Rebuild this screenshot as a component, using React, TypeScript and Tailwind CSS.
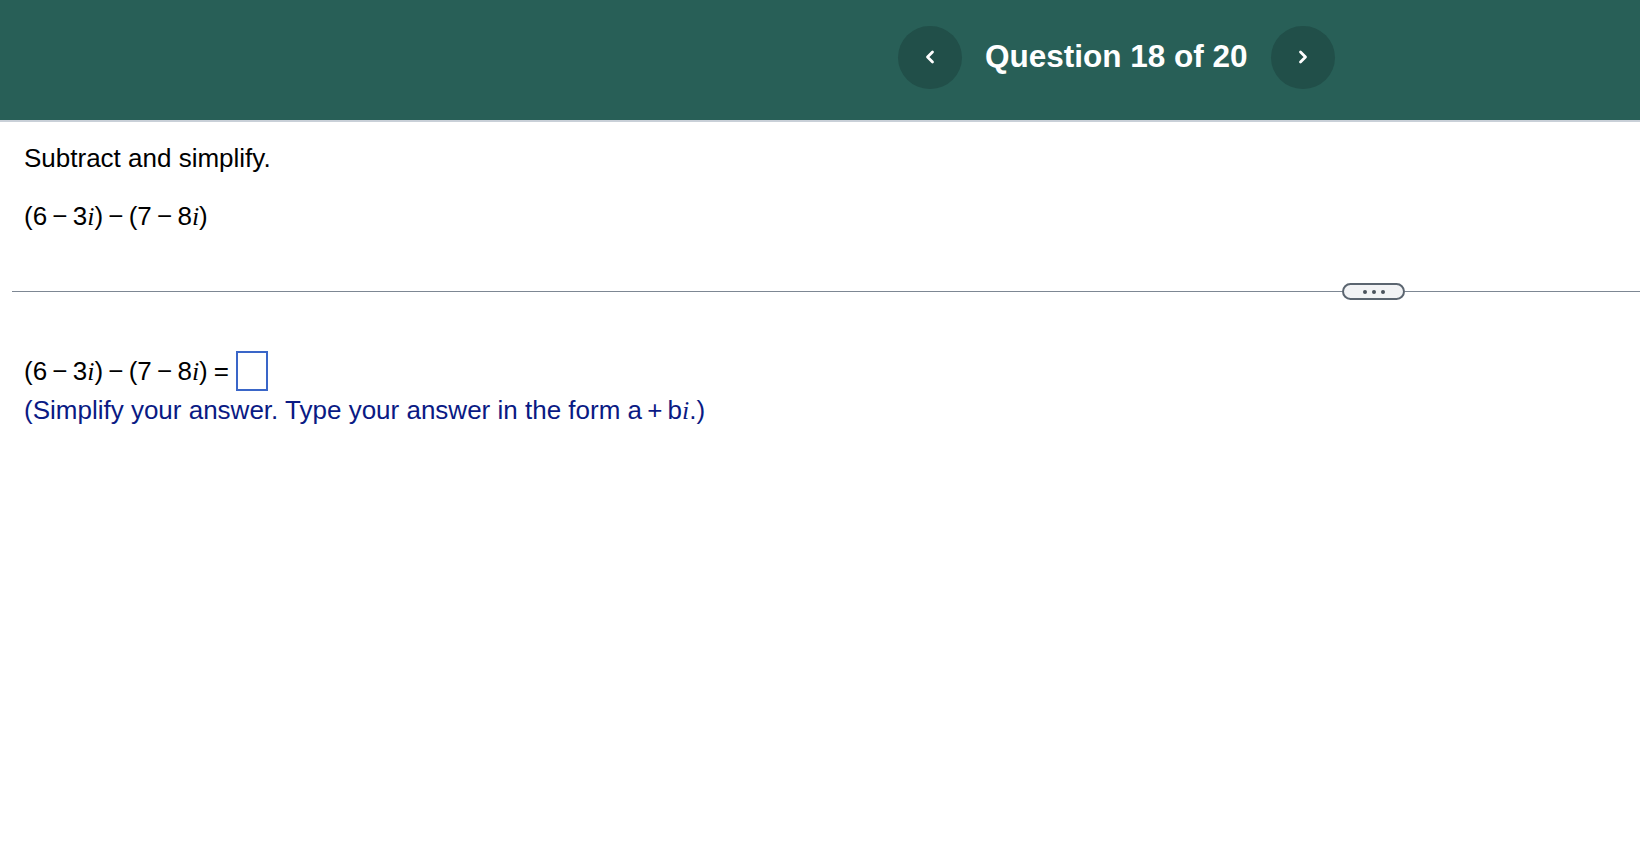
import React from 'react';

function Chevron({ dir }: { dir: 'left' | 'right' }) {
  return (
    <svg width="16" height="16" viewBox="0 0 16 16" fill="none">
      <path
        d={dir === 'left' ? 'M10.5 3 5.5 8l5 5' : 'M5.5 3l5 5-5 5'}
        stroke="white"
        strokeWidth="2.8"
        strokeLinecap="round"
        strokeLinejoin="round"
      />
    </svg>
  );
}

function MathI() {
  return <i className="font-['Liberation_Serif',serif] italic">i</i>;
}

function Expr() {
  return (
    <span className="whitespace-nowrap">
      (6{'\u2009−\u2009'}3
      <MathI />){'\u2009−\u2009'}(7{'\u2009−\u2009'}8
      <MathI />)
    </span>
  );
}

export default function App() {
  return (
    <div className="min-h-screen bg-white font-['Liberation_Sans',Arial,sans-serif] text-black">
      {/* Header */}
      <header className="h-[122px] bg-[#285f57] border-b-2 border-[#c9d0d8] flex items-center pl-[898px] pb-[6px]">
        <div className="flex items-center gap-[23px]">
          <button className="w-[64px] h-[63px] rounded-full bg-[#214f49] flex items-center justify-center">
            <Chevron dir="left" />
          </button>
          <h1 className="text-white font-bold text-[31.5px] leading-none">Question 18 of 20</h1>
          <button className="w-[64px] h-[63px] rounded-full bg-[#214f49] flex items-center justify-center">
            <Chevron dir="right" />
          </button>
        </div>
      </header>

      {/* Question */}
      <div className="px-6 pt-[17px] text-[26px] leading-[38px]">
        <p>Subtract and simplify.</p>
        <p className="mt-[20px]">
          <Expr />
        </p>
      </div>

      {/* Divider */}
      <div className="flex items-center pl-3 mt-[47px] h-[17px]">
        <div className="flex-1 h-[1.5px] bg-[#7d8793]" />
        <button className="w-[63px] h-[17px] rounded-full border-2 border-[#5b6570] bg-[#f2f3f5] flex items-center justify-center gap-[5px]">
          <span className="w-[4px] h-[4px] rounded-full bg-[#4b535c]" />
          <span className="w-[4px] h-[4px] rounded-full bg-[#4b535c]" />
          <span className="w-[4px] h-[4px] rounded-full bg-[#4b535c]" />
        </button>
        <div className="w-[235px] h-[1.5px] bg-[#7d8793]" />
      </div>

      {/* Answer */}
      <div className="px-6 mt-[51px] text-[26px]">
        <div className="flex items-center h-[40px]">
          <Expr />
          <span className="ml-[6px]">=</span>
          <span className="ml-[7px] w-[32px] h-[40px] border-2 border-[#3a66c8] bg-white" />
        </div>
        <p className="leading-[38px] text-[#0a1a84]">
          (Simplify your answer. Type your answer in the form a{'\u2009+\u2009'}b
          <MathI />.)
        </p>
      </div>
    </div>
  );
}
